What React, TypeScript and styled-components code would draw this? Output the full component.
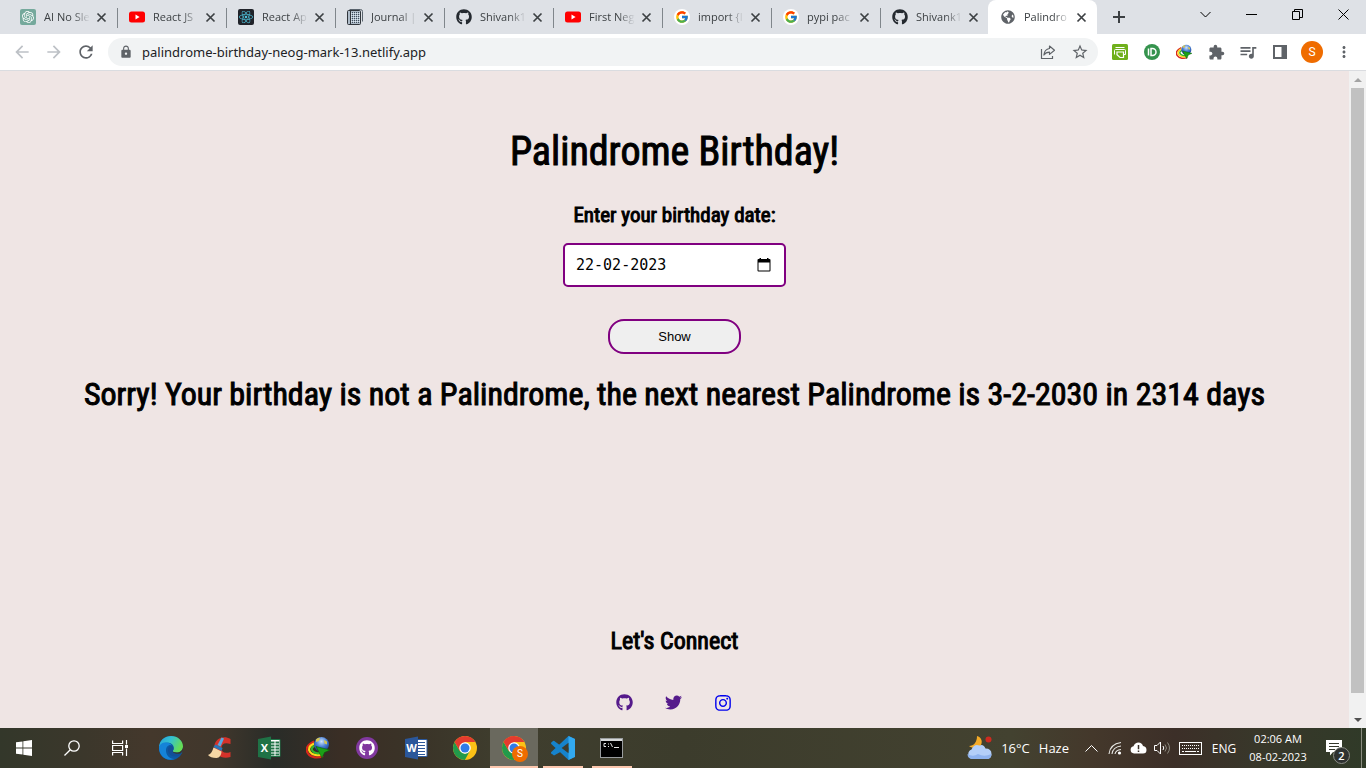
import React, { useState } from "react";
import styled, { createGlobalStyle } from "styled-components";
import { FaGithub, FaReact, FaTwitter, FaInstagram, FaGlobeAmericas } from "react-icons/fa";
import { SiOpenai } from "react-icons/si";
import { FcGoogle } from "react-icons/fc";
import {
  MdLock,
  MdExtension,
  MdQueueMusic,
  MdStarBorder,
  MdMoreVert,
  MdArrowBack,
  MdArrowForward,
  MdRefresh,
} from "react-icons/md";

const GlobalStyle = createGlobalStyle`
  *, *::before, *::after { box-sizing: border-box; }
  body { margin: 0; font-family: "Open Sans", "Noto Sans", sans-serif; }
  button { font: inherit; color: inherit; border: 0; padding: 0; background: none; }
  svg { display: block; flex: none; }
  h1, h2, h3, p { margin: 0; }
`;

const Desktop = styled.div`
  display: flex;
  flex-direction: column;
  min-height: 100vh;
`;

const TabStrip = styled.header`
  display: flex;
  height: 34px;
  padding-left: 8px;
  background: #dee1e6;
`;

const Tab = styled.div<{ $active?: boolean; $last?: boolean }>`
  position: relative;
  display: flex;
  align-items: center;
  flex: 0 1 109px;
  min-width: 0;
  margin-left: ${(p) => (p.$active ? -1 : 0)}px;
  padding: 0 9px 0 12px;
  background: ${(p) => (p.$active ? "#fff" : "transparent")};
  border-radius: 8px 8px 0 0;

  &::after {
    content: "";
    position: absolute;
    right: -1px;
    top: 8px;
    width: 1px;
    height: 20px;
    background: ${(p) => (p.$active || p.$last ? "transparent" : "#80868b")};
  }
`;

const Favicon = styled.span`
  display: flex;
  align-items: center;
  justify-content: center;
  flex: none;
  width: 16px;
  height: 16px;
`;

const TabTitle = styled.span`
  flex: 1;
  margin: 0 2px 0 8px;
  overflow: hidden;
  white-space: nowrap;
  font-size: 11px;
  line-height: 16px;
  color: #3c4043;
  mask-image: linear-gradient(to right, #000 60%, transparent 96%);
`;

const IconButton = styled.button<{ $width: number; $color?: string }>`
  display: flex;
  align-items: center;
  justify-content: center;
  flex: none;
  width: ${(p) => p.$width}px;
  height: 28px;
  color: ${(p) => p.$color || "#5f6368"};
`;

const NewTabButton = styled(IconButton)`
  height: 34px;
`;

const WindowControls = styled.div`
  display: flex;
  margin-left: auto;
`;

const Toolbar = styled.nav`
  display: flex;
  align-items: center;
  height: 37px;
  padding: 0 6px;
  background: #fff;
  border-bottom: 1px solid #dadce0;
`;

const AddressBar = styled.div`
  display: flex;
  align-items: center;
  flex: 1;
  height: 28px;
  margin: 0 6px;
  padding: 0 2px 0 11px;
  border-radius: 14px;
  background: #f1f3f4;
  color: #5f6368;
`;

const AddressInput = styled.input`
  flex: 1;
  min-width: 0;
  margin-left: 9px;
  padding: 0;
  border: 0;
  outline: 0;
  background: none;
  font: 13px/20px "Noto Sans", sans-serif;
  color: #202124;
`;

const Avatar = styled.span`
  width: 22px;
  height: 22px;
  border-radius: 50%;
  background: #ef6c00;
  color: #fff;
  font: 12px/22px Roboto, sans-serif;
  text-align: center;
`;

const Viewport = styled.div`
  display: flex;
  flex: 1;
  background: #efe5e4;
`;

const Page = styled.main`
  display: flex;
  flex-direction: column;
  align-items: center;
  flex: 1;
  padding: 57px 16px 16px;
  color: #000;
  font-family: "Roboto Condensed", Roboto, sans-serif;
  text-align: center;
`;

const Title = styled.h1`
  font-size: 40px;
  line-height: 48px;
  font-weight: 400;
  -webkit-text-stroke: 1px #000;
`;

const BirthdayForm = styled.form`
  display: flex;
  flex-direction: column;
  align-items: center;
  margin-top: 25px;
`;

const DateLabel = styled.label`
  font-size: 21px;
  line-height: 28px;
  font-weight: 400;
  -webkit-text-stroke: 1px #000;
`;

const DateField = styled.div`
  display: flex;
  align-items: center;
  width: 223px;
  height: 44px;
  margin-top: 14px;
  padding: 0 10px 0 11px;
  border: 2px solid purple;
  border-radius: 5px;
  background: #fff;
`;

const DateInput = styled.input`
  flex: 1;
  min-width: 0;
  padding: 0;
  border: 0;
  outline: 0;
  background: none;
  color: #000;
  font: 15px/20px "DejaVu Sans Mono", monospace;
`;

const ShowButton = styled.button`
  width: 133px;
  height: 35px;
  margin-top: 32px;
  border: 2px solid purple;
  border-radius: 16px;
  background: #efefef;
  color: #000;
  font: 13px/16px "Liberation Sans", Arial, sans-serif;
`;

const Result = styled.h2`
  margin-top: 20px;
  font-size: 32px;
  line-height: 40px;
  font-weight: 400;
  -webkit-text-stroke: 1px #000;
`;

const Footer = styled.footer`
  display: flex;
  flex-direction: column;
  align-items: center;
  margin-top: auto;
`;

const FooterTitle = styled.h3`
  font-size: 24px;
  line-height: 28px;
  font-weight: 400;
  -webkit-text-stroke: 1px #000;
`;

const SocialLinks = styled.div`
  display: flex;
  gap: 32px;
  margin-top: 39px;
`;

const SocialLink = styled.a<{ $visited?: boolean }>`
  display: flex;
  color: ${(p) => (p.$visited ? "#551a8b" : "#0000ee")};
`;

const Scrollbar = styled.div`
  display: flex;
  flex-direction: column;
  align-items: center;
  width: 17px;
  background: #f1f1f1;
`;

const ScrollArrow = styled.span`
  display: flex;
  align-items: center;
  justify-content: center;
  height: 17px;
`;

const ScrollThumb = styled.div`
  flex: 1;
  width: 13px;
  margin-bottom: 18px;
  background: #c1c1c1;
`;

const Taskbar = styled.footer`
  display: flex;
  height: 40px;
  color: #fff;
  background: linear-gradient(
    to right,
    #33372a 0%, #3b372b 6%, #44382c 11%, #40372c 16%, #292c28 20%, #3a2e25 25%,
    #3a3428 31%, #3f3e2e 37%, #3c3c2c 50%, #434230 74%, #44382b 80%, #3c2f28 86%,
    #38372a 92%, #303a28 100%
  );
`;

const SystemButtons = styled.div`
  display: flex;
  margin-right: 3px;
`;

const AppButtons = styled.div`
  display: flex;
  gap: 1px;
`;

const TaskButton = styled.button<{ $active?: boolean; $running?: boolean }>`
  position: relative;
  display: flex;
  align-items: center;
  justify-content: center;
  width: 48px;
  height: 40px;
  background: ${(p) => (p.$active ? "#6a695e" : "transparent")};

  &::after {
    content: "";
    position: absolute;
    bottom: 0;
    left: ${(p) => (p.$active ? 0 : 4)}px;
    right: ${(p) => (p.$active ? 0 : 4)}px;
    height: 2px;
    background: ${(p) => (p.$active || p.$running ? "#fcc7ae" : "transparent")};
  }
`;

const Badged = styled.span`
  position: relative;
  display: flex;
`;

const ProfileBadge = styled.span`
  position: absolute;
  left: 10px;
  top: 10px;
  width: 16px;
  height: 16px;
  border-radius: 50%;
  background: #ef6c00;
  font: 10px/16px Roboto, sans-serif;
  text-align: center;
`;

const CountBadge = styled.span`
  position: absolute;
  left: 7px;
  top: 7px;
  width: 17px;
  height: 17px;
  border: 1px solid #8b8d86;
  border-radius: 50%;
  background: #2e3130;
  font-size: 11px;
  font-weight: 600;
  line-height: 15px;
  text-align: center;
`;

const Tray = styled.div`
  display: flex;
  align-items: center;
  margin-left: auto;
`;

const Weather = styled.button`
  display: flex;
  align-items: center;
  gap: 9px;
  margin-right: 10px;
  font-size: 13px;
  line-height: 20px;
`;

const TrayButton = styled.button<{ $width: number }>`
  display: flex;
  align-items: center;
  justify-content: center;
  width: ${(p) => p.$width}px;
  height: 40px;
  font-size: 12px;
`;

const Clock = styled.time`
  width: 72px;
  font-size: 11px;
  line-height: 18px;
  text-align: center;
  white-space: nowrap;
`;

const DesktopPeek = styled.button`
  width: 5px;
  height: 40px;
  margin-left: 7px;
  border-left: 1px solid #8a8c80;
`;

const OpenAiIcon = () => (
  <svg width="16" height="16" viewBox="0 0 16 16">
    <rect width="16" height="16" rx="2" fill="#75a99c" />
    <SiOpenai x="2" y="2" size={12} color="#fff" />
  </svg>
);

const ReactIcon = () => (
  <svg width="16" height="16" viewBox="0 0 16 16">
    <rect width="16" height="16" rx="2" fill="#20232a" />
    <FaReact x="1" y="1" size={14} color="#4fc3dc" />
  </svg>
);

const JournalIcon = () => (
  <svg width="16" height="16" viewBox="0 0 16 16">
    <path d="M2.500.500h11q2 0 2 2v10" fill="none" stroke="#59636d" />
    <rect x=".5" y="1.500" width="13" height="14" rx="1" fill="#aebbc8" stroke="#30353b" />
    <path d="M3.500 2v13" stroke="#30353b" />
    <path d="M5 3.500h8M5 5.500h8M5 7.500h8M5 9.500h8M5 11.500h8M5 13.500h8" stroke="#3f4c5a" strokeDasharray="1 1" />
    <path d="M4 4.500h9M4 6.500h9M4 8.500h9M4 10.500h9M4 12.500h9" stroke="#dbe6f0" strokeDasharray="1 1" />
  </svg>
);

const GoogleIcon = () => (
  <svg width="16" height="16" viewBox="0 0 16 16">
    <circle cx="8" cy="8" r="8" fill="#fff" />
    <FcGoogle x="1" y="1" size={14} />
  </svg>
);

const YoutubeIcon = () => (
  <svg width="16" height="16" viewBox="0 0 16 16">
    <rect y="2.500" width="16" height="11" rx="2.500" fill="#f00" />
    <path d="M6.500 5.500v5L10.600 8z" fill="#fff" />
  </svg>
);

const ShareIcon = () => (
  <svg width="16" height="16" viewBox="0 0 16 16" fill="none" stroke="#5f6368" strokeWidth="1.200">
    <path d="M1.500 5v9.500h11V12" />
    <path d="M9.500 2l5 4.200-5 4.200V8.100C7 8.100 5.200 8.900 3.900 11c.3-3.400 2.300-6 5.600-6.500z" strokeLinejoin="round" />
  </svg>
);

const PrintIcon = () => (
  <svg width="16" height="16" viewBox="0 0 16 16">
    <rect width="16" height="16" rx="1.500" fill="#6fb01c" />
    <path d="M3.500 3.500h9" stroke="#fff" />
    <path d="M2.500 10.500v-4q0-1 1-1h9q1 0 1 1v4H12" fill="none" stroke="#fff" />
    <path d="M5 8h6.500v5.500H8L5 10.800z" fill="#6fb01c" stroke="#fff" strokeWidth="1.200" />
  </svg>
);

const PushIcon = () => (
  <svg width="16" height="16" viewBox="0 0 16 16">
    <circle cx="8" cy="8" r="8" fill="#35934d" />
    <path d="M4.500 4.500v7M7 4.500h1.500a3.500 3.500 0 010 7H7z" fill="none" stroke="#fff" strokeWidth="1.500" />
  </svg>
);

const IdmIcon = ({ size }: { size: number }) => (
  <svg width={size} height={size} viewBox="0 0 24 24">
    <defs>
      <radialGradient id="globe" cx=".5" cy=".3" r=".7">
        <stop offset="0" stopColor="#cfe4fb" />
        <stop offset=".5" stopColor="#4a80d6" />
        <stop offset="1" stopColor="#123a87" />
      </radialGradient>
    </defs>
    <g fill="none" strokeWidth="2.200">
      <path d="M8 5.500C1 9-1 13 2 17.500s10 5 15 2.500" stroke="#d9281c" />
      <path d="M8 7.500c-5 2.500-6 5.500-4 8.500s8 4 12 2.500" stroke="#ffd91c" />
      <path d="M9 9.500c-4 2-4 4-2 6s6 2 9 1" stroke="#35b52b" />
    </g>
    <circle cx="15.500" cy="8.500" r="7.500" fill="url(#globe)" />
    <path d="M10 3.500c1-1 3-2 4-1.500l-1 3-3 1zM18 4l3 1.500v3l-2.500-1z" fill="#d5c654" />
    <path d="M10 10.500L24 14l-5.500 2.500L16 22z" fill="#1ba017" stroke="#0b5c0c" strokeWidth=".6" />
  </svg>
);

const SidePanelIcon = () => (
  <svg width="14" height="14" viewBox="0 0 14 14">
    <path d="M0 0h14v14H0zM2 2v10h6.500V2z" fill="#5f6368" fillRule="evenodd" />
  </svg>
);

const Glyph = ({ d, size = 11, weight = 1 }: { d: string; size?: number; weight?: number }) => (
  <svg
    width={size}
    height={size}
    viewBox={`0 0 ${size} ${size}`}
    fill="none"
    stroke="currentColor"
    strokeWidth={weight}
  >
    <path d={d} />
  </svg>
);

const CalendarIcon = () => (
  <svg width="14" height="14" viewBox="0 0 14 14">
    <path d="M2.500 0H4v1h6V0h1.500v1H12.500q1 0 1 1V12.500q0 1-1 1H1.500q-1 0-1-1V2q0-1 1-1h1zM1.500 4.500v8h11v-8z" fill="#000" fillRule="evenodd" />
  </svg>
);

const WindowsIcon = () => (
  <svg width="16" height="16" viewBox="0 0 16 16" fill="#fff">
    <path d="M0 2.300L6.500 1.400v6.200H0zM7.300 1.300L16 0v7.600H7.300zM0 8.400h6.500v6.200L0 13.700zM7.300 8.400H16V16l-8.700-1.300z" />
  </svg>
);

const SearchIcon = () => (
  <svg width="16" height="16" viewBox="0 0 16 16" fill="none" stroke="#fff" strokeWidth="1.300">
    <circle cx="10" cy="6" r="5.200" />
    <path d="M6.300 9.700L.5 15.500" />
  </svg>
);

const TaskViewIcon = () => (
  <svg width="17" height="16" viewBox="0 0 17 16" fill="none" stroke="#fff" strokeWidth="1.200">
    <path d="M.6.500v3h10v-3M.6 15.500v-3h10v3M.6 5.500h10v5H.6zM14.500 0v4.500M14.500 8.500V16" />
    <path d="M13 5h3v3h-3z" fill="#fff" stroke="none" />
  </svg>
);

const EdgeIcon = () => (
  <svg width="24" height="24" viewBox="0 0 24 24">
    <defs>
      <linearGradient id="edgeTop" x1="0" y1="0" x2="1" y2=".4">
        <stop offset="0" stopColor="#25a0dc" />
        <stop offset=".5" stopColor="#35c1d0" />
        <stop offset="1" stopColor="#65dc55" />
      </linearGradient>
    </defs>
    <circle cx="12" cy="12" r="12" fill="#0c59a4" />
    <path d="M0 12C0 4 6 0 12 0c7 0 12 5 12 10.500 0 4-3 6-6.500 6-3 0-4-1-3.500-2 1.500-2 1-6-3-7.500C6 6 1 8 0 12z" fill="url(#edgeTop)" />
    <path d="M0 12c0-4 4-6 8-5.500 2 .2 4 1.500 5 3-3-1.500-6 1-6 5 0 5 4 9 9 8.500C7 26 0 20 0 12z" fill="#1583d8" />
    <path d="M14 14.500c1-1.500.8-3-.3-4.300C11 9.300 9 11 9 14c0 4 4 7 8 6.500 2 0 4-1 5.300-2.700 .3-.5 0-.8-.5-.6-3.800 1.500-8.800.5-7.800-2.700z" fill="#124f98" />
    <path d="M14 14.500c-1 3 4 4.200 7.800 2.700L24 15V11c-.3 3.500-3 5.500-6.500 5.500-3 0-4-1-3.500-2z" fill="#3b342a" />
  </svg>
);

const CCleanerIcon = () => (
  <svg width="24" height="24" viewBox="0 0 24 24">
    <path d="M22.500 8V3C16-1 8 2 6.500 9c-1.500 9 7 15 16 12v-5c-5 2-9 .5-9-4C13.500 7.500 17 6 22.500 8z" fill="#d5322a" />
    <path d="M13.500 1.500l2.500 1-3.500 8-3-1.500z" fill="#58a9e0" />
    <path d="M7.500 8.500l7 3.500-1 3-8-4z" fill="#2777bc" />
    <path d="M5.500 11.500l8 4c0 3-2 6.500-5 6.500-4 0-7-1-8.500-3 3-1 4.500-4 5.500-7.500z" fill="#f5d7a4" />
  </svg>
);

const OfficeIcon = ({ letter, color, sheet }: { letter: string; color: string; sheet?: boolean }) => (
  <svg width="24" height="24" viewBox="0 0 24 24">
    <path d="M12 3.500h11v17H12z" fill="#fff" stroke={color} />
    {sheet ? (
      <path d="M14 6.500h8M14 9.500h8M14 12.500h8M14 15.500h8M14 18.500h8" stroke={color} strokeWidth="1.800" strokeDasharray="3.500 1" />
    ) : (
      <path d="M14 6.500h7M14 9.500h7M14 12.500h7M14 15.500h7M14 18.500h7" stroke={color} />
    )}
    <path d="M1 3l13-2.500v23L1 21z" fill={color} />
    <text x="7.500" y="16" fill="#fff" fontSize="11" fontWeight="bold" fontFamily="Open Sans, sans-serif" textAnchor="middle">
      {letter}
    </text>
  </svg>
);

const GithubDesktopIcon = () => (
  <svg width="24" height="24" viewBox="0 0 24 24">
    <circle cx="12" cy="12" r="11" fill="#81389f" />
    <FaGithub x="4" y="4" size={16} color="#fff" />
  </svg>
);

const ChromeIcon = () => (
  <svg width="24" height="24" viewBox="0 0 24 24">
    <circle cx="12" cy="12" r="12" fill="#fbc116" />
    <path d="M1.610 6l5.200 9L12 18l4.900-3.200-5 9.200A12 12 0 011.610 6z" fill="#229a4b" />
    <path d="M1.610 6A12 12 0 0112 0a12 12 0 0110.390 6H12l-5.200 9z" fill="#e33b2e" />
    <circle cx="12" cy="12" r="5.800" fill="#fff" />
    <circle cx="12" cy="12" r="4.500" fill="#2f7be8" />
  </svg>
);

const VsCodeIcon = () => (
  <svg width="24" height="24" viewBox="0 0 24 24">
    <path d="M17.500 0L24 3v5L3 19.500.3 17.500q-.6-.7 0-1.400z" fill="#1683cc" />
    <path d="M17.500 24L.3 7.900q-.6-.7 0-1.400L2 5q.6-.4 1.300 0L24 20.500z" fill="#1683cc" />
    <path d="M17.500 0L24 3v18l-6.500 3V0z" fill="#32a9f0" />
    <path d="M17.500 6.700v10.600L10.600 12z" fill="#3d3c2e" />
  </svg>
);

const TerminalIcon = () => (
  <svg width="24" height="20" viewBox="0 0 24 20">
    <rect x=".5" y=".5" width="22" height="19" fill="#000" stroke="#9a9d9f" />
    <path d="M1 2h21" stroke="#d5d8d9" strokeWidth="2" />
    <path d="M6 5.500H4v3h2M8.500 5.500v1M8.500 8v1M10.500 5l2 4M14 9.500h5" fill="none" stroke="#e4e4e4" />
  </svg>
);

const WeatherIcon = () => (
  <svg width="25" height="24" viewBox="0 0 25 24">
    <path d="M10 0c4 1 6 5 4 9s-8 4-12 1c5 0 8-4 8-10z" fill="#f5ab27" />
    <circle cx="21.500" cy="3.500" r="3" fill="#cd2b20" />
    <path d="M5 23a5 5 0 01-.500-9.500Q7 7.500 12.500 9.500q4-2 6 3 6 0 6 5.500 0 5-5 5z" fill="#b4cff8" />
    <path d="M5 23a5 5 0 01-4.500-5q5.500 3.500 10.500 0 6 3.500 13.500 0 0 5-5 5z" fill="#8fb3ee" />
  </svg>
);

const WifiIcon = () => (
  <svg width="14" height="14" viewBox="0 0 14 14" fill="none" stroke="#e8e8e4" strokeWidth="1.100">
    <path d="M1 13Q2 3 13 1.500M4 13q.8-7 9-8M7 13q.8-4 6-4.500" />
    <circle cx="11.500" cy="12" r="1.600" fill="#fff" stroke="none" />
  </svg>
);

const CloudIcon = () => (
  <svg width="17" height="12" viewBox="0 0 17 12">
    <path d="M4 11.500a3.700 3.700 0 01-.500-7.300Q5 .500 8.500.500q3.500 0 4.500 3.500 3.500.5 3.500 4 0 3.500-3.500 3.500z" fill="#fff" />
    <path d="M8.500 3v4.200M8.500 8.500v1.600" stroke="#3b3129" strokeWidth="1.500" />
  </svg>
);

const SpeakerIcon = () => (
  <svg width="17" height="14" viewBox="0 0 17 14" fill="none" stroke="#fff">
    <path d="M.5 4.500H3l3.500-3.500v12L3 9.500H.5zM9 5q1.500 2 0 4" />
    <path d="M11 3.500q3 3.500 0 7M13.500 1.500q4 5.500 0 11" stroke="#8d8a80" />
  </svg>
);

const KeyboardIcon = () => (
  <svg width="23" height="13" viewBox="0 0 23 13" fill="none" stroke="#fff">
    <rect x=".5" y=".5" width="22" height="12" />
    <path d="M3 3.500h17M3 6.500h17" strokeDasharray="1 1" />
    <path d="M3 9.500h2M6 9.500h11M18 9.500h2" />
  </svg>
);

const NotificationIcon = () => (
  <svg width="16" height="16" viewBox="0 0 16 16">
    <path d="M0 0h16v12H7l-3 3.500V12H0z" fill="#fff" />
    <path d="M3 3.500h10M3 6.500h10M3 9.500h6" stroke="#34372b" />
  </svg>
);

const tabs = [
  { title: "AI No Sle", icon: <OpenAiIcon /> },
  { title: "React JS", icon: <YoutubeIcon /> },
  { title: "React Ap", icon: <ReactIcon /> },
  { title: "Journal |", icon: <JournalIcon /> },
  { title: "Shivank1", icon: <FaGithub size={16} color="#24292f" /> },
  { title: "First Neg", icon: <YoutubeIcon /> },
  { title: "import {I", icon: <GoogleIcon /> },
  { title: "pypi pac", icon: <GoogleIcon /> },
  { title: "Shivank1", icon: <FaGithub size={16} color="#24292f" />, last: true },
  { title: "Palindro", icon: <FaGlobeAmericas size={14} color="#5f6368" />, active: true },
];

const apps = [
  { name: "Edge", icon: <EdgeIcon /> },
  { name: "CCleaner", icon: <CCleanerIcon /> },
  { name: "Excel", icon: <OfficeIcon letter="X" color="#1f7246" sheet /> },
  { name: "Download Manager", icon: <IdmIcon size={24} /> },
  { name: "GitHub Desktop", icon: <GithubDesktopIcon /> },
  { name: "Word", icon: <OfficeIcon letter="W" color="#2b579a" /> },
  { name: "Chrome", icon: <ChromeIcon /> },
  {
    name: "Chrome profile",
    active: true,
    icon: (
      <Badged>
        <ChromeIcon />
        <ProfileBadge>S</ProfileBadge>
      </Badged>
    ),
  },
  { name: "Visual Studio Code", icon: <VsCodeIcon />, running: true },
  { name: "Command Prompt", icon: <TerminalIcon />, running: true },
];

export default function App() {
  const [date, setDate] = useState("22-02-2023");
  const [url, setUrl] = useState("palindrome-birthday-neog-mark-13.netlify.app");

  return (
    <Desktop>
      <GlobalStyle />
      <TabStrip>
        {tabs.map((tab, i) => (
          <Tab key={i} $active={tab.active} $last={tab.last}>
            <Favicon>{tab.icon}</Favicon>
            <TabTitle>{tab.title}</TabTitle>
            <IconButton $width={14} $color="#3c4043" aria-label="Close tab">
              <Glyph d="M1.500 1.500l8 8M9.500 1.500l-8 8" weight={1.7} />
            </IconButton>
          </Tab>
        ))}
        <NewTabButton $width={44} $color="#3c4043" aria-label="New tab">
          <Glyph d="M6 0v12M0 6h12" size={12} weight={2} />
        </NewTabButton>
        <WindowControls>
          <IconButton $width={46} $color="#000" aria-label="Search tabs">
            <Glyph d="M.5 3l5 5 5-5" />
          </IconButton>
          <IconButton $width={46} $color="#000" aria-label="Minimize">
            <Glyph d="M0 5.500h11" />
          </IconButton>
          <IconButton $width={46} $color="#000" aria-label="Restore">
            <Glyph d="M.5 2.500h7v8h-7zM2.500 2.500v-2h8v8h-3" />
          </IconButton>
          <IconButton $width={46} $color="#000" aria-label="Close">
            <Glyph d="M.5.500l10 10M10.500.500l-10 10" />
          </IconButton>
        </WindowControls>
      </TabStrip>

      <Toolbar>
        <IconButton $width={32} $color="#bdc1c6" aria-label="Back">
          <MdArrowBack size={20} />
        </IconButton>
        <IconButton $width={32} $color="#bdc1c6" aria-label="Forward">
          <MdArrowForward size={20} />
        </IconButton>
        <IconButton $width={32} aria-label="Reload">
          <MdRefresh size={20} />
        </IconButton>
        <AddressBar>
          <MdLock size={14} />
          <AddressInput aria-label="Address" value={url} onChange={(e) => setUrl(e.target.value)} />
          <IconButton $width={32} aria-label="Share">
            <ShareIcon />
          </IconButton>
          <IconButton $width={32} aria-label="Bookmark">
            <MdStarBorder size={18} />
          </IconButton>
        </AddressBar>
        <IconButton $width={32} aria-label="Print page">
          <PrintIcon />
        </IconButton>
        <IconButton $width={32} aria-label="Pushbullet">
          <PushIcon />
        </IconButton>
        <IconButton $width={32} aria-label="Download manager">
          <IdmIcon size={16} />
        </IconButton>
        <IconButton $width={32} aria-label="Extensions">
          <MdExtension size={17} />
        </IconButton>
        <IconButton $width={32} aria-label="Media">
          <MdQueueMusic size={20} />
        </IconButton>
        <IconButton $width={32} aria-label="Side panel">
          <SidePanelIcon />
        </IconButton>
        <IconButton $width={32} aria-label="Profile">
          <Avatar>S</Avatar>
        </IconButton>
        <IconButton $width={32} aria-label="Menu">
          <MdMoreVert size={18} />
        </IconButton>
      </Toolbar>

      <Viewport>
        <Page>
          <Title>Palindrome Birthday!</Title>
          <BirthdayForm onSubmit={(e) => e.preventDefault()}>
            <DateLabel htmlFor="birthday">Enter your birthday date:</DateLabel>
            <DateField>
              <DateInput id="birthday" value={date} onChange={(e) => setDate(e.target.value)} />
              <IconButton type="button" $width={20} aria-label="Open calendar">
                <CalendarIcon />
              </IconButton>
            </DateField>
            <ShowButton>Show</ShowButton>
          </BirthdayForm>
          <Result>
            Sorry! Your birthday is not a Palindrome, the next nearest Palindrome is 3-2-2030 in 2314 days
          </Result>
          <Footer>
            <FooterTitle>Let's Connect</FooterTitle>
            <SocialLinks>
              <SocialLink href="#github" aria-label="GitHub" $visited>
                <FaGithub size={17} />
              </SocialLink>
              <SocialLink href="#twitter" aria-label="Twitter" $visited>
                <FaTwitter size={17} />
              </SocialLink>
              <SocialLink href="#instagram" aria-label="Instagram">
                <FaInstagram size={18} />
              </SocialLink>
            </SocialLinks>
          </Footer>
        </Page>
        <Scrollbar>
          <ScrollArrow>
            <svg width="8" height="4" viewBox="0 0 8 4">
              <path d="M0 4l4-4 4 4z" fill="#a3a3a3" />
            </svg>
          </ScrollArrow>
          <ScrollThumb />
          <ScrollArrow>
            <svg width="8" height="4" viewBox="0 0 8 4">
              <path d="M0 0l4 4 4-4z" fill="#505050" />
            </svg>
          </ScrollArrow>
        </Scrollbar>
      </Viewport>

      <Taskbar>
        <SystemButtons>
          <TaskButton aria-label="Start">
            <WindowsIcon />
          </TaskButton>
          <TaskButton aria-label="Search">
            <SearchIcon />
          </TaskButton>
          <TaskButton aria-label="Task view">
            <TaskViewIcon />
          </TaskButton>
        </SystemButtons>
        <AppButtons>
          {apps.map((app) => (
            <TaskButton key={app.name} aria-label={app.name} $active={app.active} $running={app.running}>
              {app.icon}
            </TaskButton>
          ))}
        </AppButtons>
        <Tray>
          <Weather>
            <WeatherIcon />
            <span>16°C</span>
            <span>Haze</span>
          </Weather>
          <TrayButton $width={24} aria-label="Hidden icons">
            <Glyph d="M.5 9.500l6-6 6 6" size={13} />
          </TrayButton>
          <TrayButton $width={24} aria-label="Network">
            <WifiIcon />
          </TrayButton>
          <TrayButton $width={23} aria-label="OneDrive">
            <CloudIcon />
          </TrayButton>
          <TrayButton $width={24} aria-label="Volume">
            <SpeakerIcon />
          </TrayButton>
          <TrayButton $width={32} aria-label="Keyboard">
            <KeyboardIcon />
          </TrayButton>
          <TrayButton $width={36}>ENG</TrayButton>
          <Clock>
            02:06 AM
            <br />
            08-02-2023
          </Clock>
          <TrayButton $width={40} aria-label="Notifications">
            <Badged>
              <NotificationIcon />
              <CountBadge>2</CountBadge>
            </Badged>
          </TrayButton>
          <DesktopPeek aria-label="Show desktop" />
        </Tray>
      </Taskbar>
    </Desktop>
  );
}
